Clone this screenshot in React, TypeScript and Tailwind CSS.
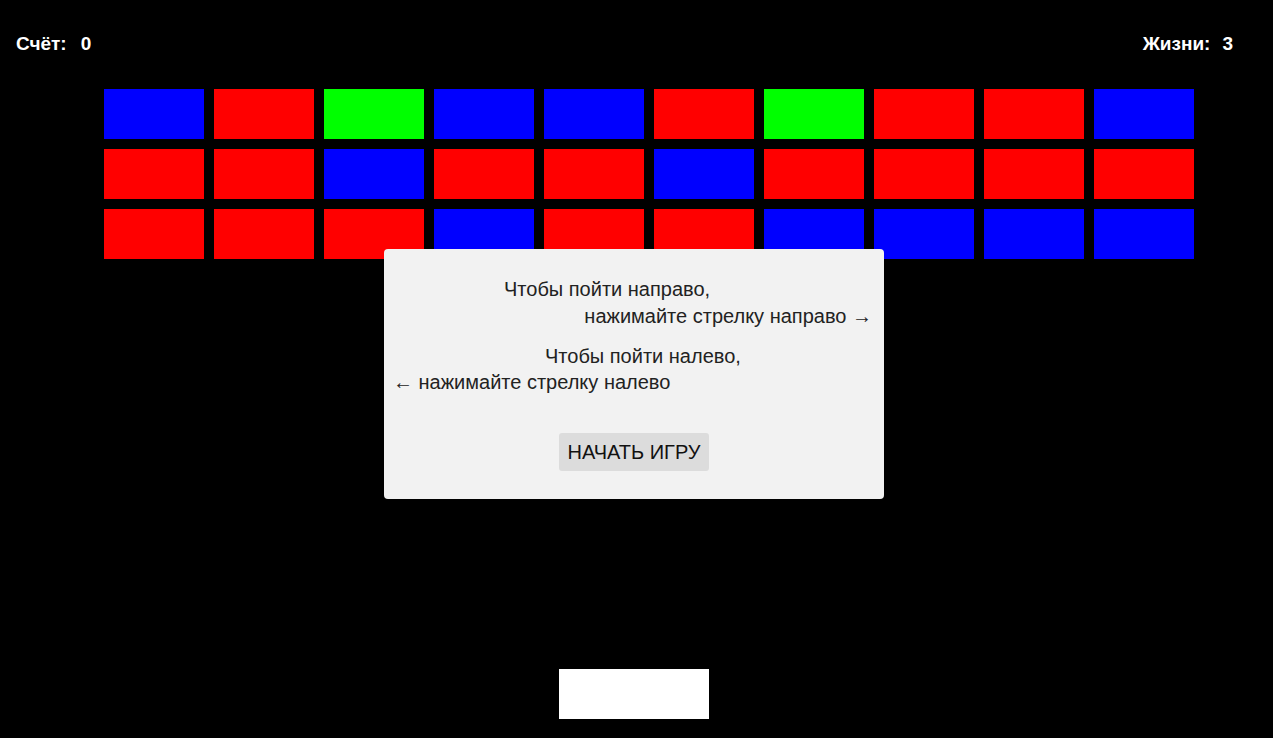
const rows = [
  ['blue', 'red', 'green', 'blue', 'blue', 'red', 'green', 'red', 'red', 'blue'],
  ['red', 'red', 'blue', 'red', 'red', 'blue', 'red', 'red', 'red', 'red'],
  ['red', 'red', 'red', 'blue', 'red', 'red', 'blue', 'blue', 'blue', 'blue'],
];

const brickColor: Record<string, string> = {
  red: 'bg-[#ff0000]',
  blue: 'bg-[#0000ff]',
  green: 'bg-[#00ff00]',
};

const App = () => {
  return (
    <div className="relative h-[738px] w-full overflow-hidden bg-black font-['Liberation_Sans',Arial,sans-serif]">
      <div className="flex items-center justify-between pl-4 pr-10 pt-[32px] text-[19px] font-bold leading-[24px] text-white">
        <div className="flex">
          <span>Счёт:</span>
          <span className="ml-[14px]">0</span>
        </div>
        <div className="flex">
          <span>Жизни:</span>
          <span className="ml-[12px]">3</span>
        </div>
      </div>

      <div className="ml-[104px] mt-[33px] flex flex-col gap-[10px]">
        {rows.map((row, r) => (
          <div key={r} className="flex gap-[10px]">
            {row.map((c, i) => (
              <div key={i} className={`h-[50px] w-[100px] ${brickColor[c]}`} />
            ))}
          </div>
        ))}
      </div>

      <div className="absolute left-[559px] top-[669px] h-[50px] w-[150px] bg-white" />

      <div className="absolute left-[384px] top-[249px] flex h-[250px] w-[500px] flex-col rounded-[4px] bg-[#f2f2f2] text-[20px] leading-[27px] text-[#222]">
        <div className="mt-[27px] pl-[120px]">Чтобы пойти направо,</div>
        <div className="self-end pr-[12px]">нажимайте стрелку направо →</div>
        <div className="mt-[13px] pl-[161px]">Чтобы пойти налево,</div>
        <div className="-mt-[1px] pl-[9px]">← нажимайте стрелку налево</div>
        <button className="mx-auto mt-[37px] h-[38px] w-[150px] rounded-[3px] bg-[#dcdcdc] text-[20px] leading-[38px] text-[#111]">
          НАЧАТЬ ИГРУ
        </button>
      </div>
    </div>
  );
};

export default App;
